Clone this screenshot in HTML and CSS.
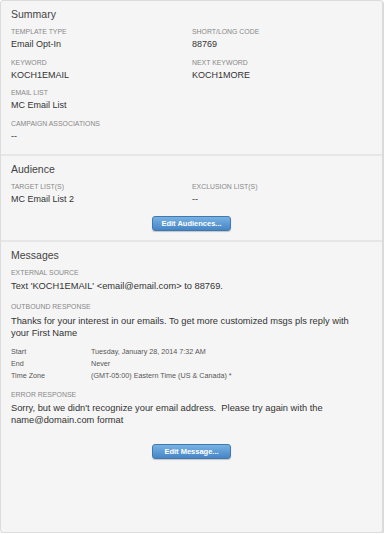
FILE: index.html
```html
<!DOCTYPE html>
<html lang="en">
<head>
    <meta charset="UTF-8">
    <meta name="viewport" content="width=device-width, initial-scale=1.0">
    <title>Campaign Summary</title>
    <link rel="stylesheet" href="styles.css">
</head>
<body>
    <div class="panel">
        <div class="seccion resumen">
            <h2>Summary</h2>
            <div class="campos">
                <div class="campo">
                    <div class="etiqueta">Template Type</div>
                    <div class="valor">Email Opt-In</div>
                </div>
                <div class="campo">
                    <div class="etiqueta">Short/Long Code</div>
                    <div class="valor">88769</div>
                </div>
                <div class="campo">
                    <div class="etiqueta">Keyword</div>
                    <div class="valor">KOCH1EMAIL</div>
                </div>
                <div class="campo">
                    <div class="etiqueta">Next Keyword</div>
                    <div class="valor">KOCH1MORE</div>
                </div>
                <div class="campo">
                    <div class="etiqueta">Email List</div>
                    <div class="valor">MC Email List</div>
                </div>
                <div class="campo"></div>
                <div class="campo">
                    <div class="etiqueta">Campaign Associations</div>
                    <div class="valor">--</div>
                </div>
            </div>
        </div>

        <div class="seccion audiencia">
            <h2>Audience</h2>
            <div class="campos">
                <div class="campo">
                    <div class="etiqueta">Target List(s)</div>
                    <div class="valor">MC Email List 2</div>
                </div>
                <div class="campo">
                    <div class="etiqueta">Exclusion List(s)</div>
                    <div class="valor">--</div>
                </div>
            </div>
            <div class="botones">
                <button class="boton">Edit Audiences...</button>
            </div>
        </div>

        <div class="seccion mensajes">
            <h2>Messages</h2>
            <div class="bloque">
                <div class="etiqueta">External Source</div>
                <div class="valor">Text 'KOCH1EMAIL' &lt;email@email.com&gt; to 88769.</div>
            </div>
            <div class="bloque respuesta">
                <div class="etiqueta">Outbound Response</div>
                <div class="valor">Thanks for your interest in our emails. To get more customized msgs pls reply with your First Name</div>
            </div>
            <div class="horario">
                <span>Start</span><span>Tuesday, January 28, 2014 7:32 AM</span>
                <span>End</span><span>Never</span>
                <span>Time Zone</span><span>(GMT-05:00) Eastern Time (US &amp; Canada) *</span>
            </div>
            <div class="bloque">
                <div class="etiqueta">Error Response</div>
                <div class="valor">Sorry, but we didn't recognize your email address.&nbsp; Please try again with the name@domain.com format</div>
            </div>
            <div class="botones grande">
                <button class="boton">Edit Message...</button>
            </div>
        </div>
    </div>
</body>
</html>
```

FILE: styles.css
```css
body {
    margin: 0;
    background-color: #ffffff;
    font-family: "Liberation Sans", Arial, sans-serif;
    color: #333333;
}
.panel {
    width: 381px;
    height: 531px;
    background: #f5f5f5;
    border: 1px solid #dcdcdc;
    border-radius: 3px;
    box-shadow: 1px 1px 1px #d6d6d6;
    display: flex;
    flex-direction: column;
}
.seccion {
    padding: 6px 10px 11px 10px;
    border-bottom: 2px solid #e6e6e6;
}
.audiencia {
    padding-bottom: 9px;
}
.mensajes {
    padding-top: 6px;
    border-bottom: none;
}
h2 {
    margin: 0 0 6px 0;
    font-size: 10.5px;
    line-height: 14px;
    font-weight: normal;
    color: #444444;
}
.campos {
    display: grid;
    grid-template-columns: 181px 1fr;
    row-gap: 6.5px;
}
.etiqueta {
    font-size: 6.9px;
    line-height: 9px;
    text-transform: uppercase;
    color: #888888;
    margin-bottom: 2px;
}
.valor {
    font-size: 9px;
    line-height: 13px;
    color: #333333;
}
.botones {
    display: flex;
    justify-content: center;
    margin-top: 10px;
}
.botones.grande {
    margin-top: 18px;
}
.boton {
    width: 79px;
    height: 15px;
    padding: 0;
    border: 1px solid #4278b0;
    border-radius: 3px;
    background: linear-gradient(#78b2e3, #4685c6);
    box-shadow: 0 1px 1px rgba(0, 0, 0, 0.2);
    color: #ffffff;
    font-family: "Liberation Sans", Arial, sans-serif;
    font-size: 7.5px;
    font-weight: bold;
    cursor: pointer;
}
.bloque {
    margin-bottom: 10px;
    padding-right: 5px;
}
.bloque.respuesta {
    margin-bottom: 7px;
}
.bloque .etiqueta {
    margin-bottom: 3.5px;
}
.bloque .valor {
    font-size: 9.3px;
    line-height: 12px;
}
.horario {
    display: grid;
    grid-template-columns: 80px 1fr;
    font-size: 7.2px;
    line-height: 12px;
    color: #555555;
    margin: 0 0 8px 0;
}
```
